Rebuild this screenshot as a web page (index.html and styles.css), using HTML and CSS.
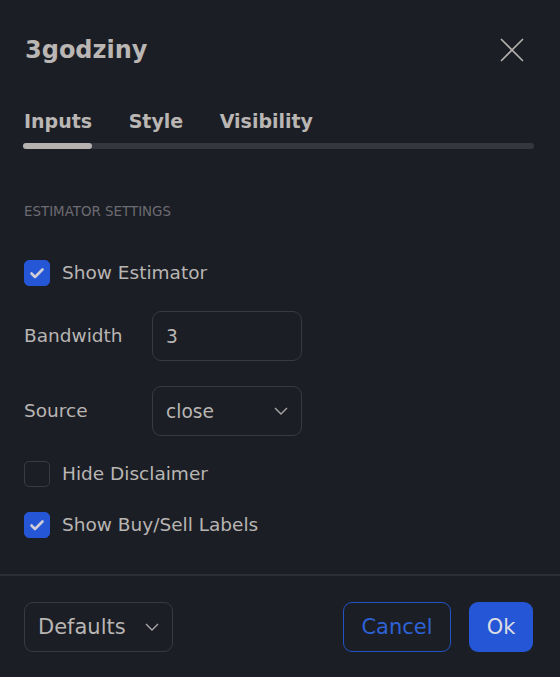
FILE: index.html
```html
<!DOCTYPE html>
<html>
<head>
<meta charset="utf-8">
<link rel="stylesheet" href="styles.css">
</head>
<body>
<div class="dialog">
  <div class="header">
    <div class="title">3godziny</div>
    <svg class="close" width="24" height="24" viewBox="0 0 24 24"><path d="M1 1 L23 23 M23 1 L1 23" stroke="#b3b0ae" stroke-width="1.6" fill="none"/></svg>
  </div>
  <div class="tabs">
    <span class="tab">Inputs</span>
    <span class="tab">Style</span>
    <span class="tab">Visibility</span>
  </div>
  <div class="tabbar"><div class="tabbar-active"></div></div>

  <div class="section">Estimator settings</div>

  <div class="rows">
    <div class="check-row">
      <span class="box checked"><svg width="26" height="26" viewBox="0 0 26 26"><path d="M7.5 13.5 L11 17 L18.5 9.5" stroke="#cfcdd6" stroke-width="2.6" fill="none" stroke-linecap="round" stroke-linejoin="round"/></svg></span>
      <span class="check-label">Show Estimator</span>
    </div>
    <div class="field-row">
      <span class="field-label">Bandwidth</span>
      <div class="input">3</div>
    </div>
    <div class="field-row">
      <span class="field-label">Source</span>
      <div class="input select">close<svg class="chev" width="14" height="8" viewBox="0 0 14 8"><path d="M1 1 L7 7 L13 1" stroke="#a9a6a5" stroke-width="1.4" fill="none"/></svg></div>
    </div>
    <div class="check-row">
      <span class="box"></span>
      <span class="check-label">Hide Disclaimer</span>
    </div>
    <div class="check-row">
      <span class="box checked"><svg width="26" height="26" viewBox="0 0 26 26"><path d="M7.5 13.5 L11 17 L18.5 9.5" stroke="#cfcdd6" stroke-width="2.6" fill="none" stroke-linecap="round" stroke-linejoin="round"/></svg></span>
      <span class="check-label">Show Buy/Sell Labels</span>
    </div>
  </div>

  <div class="separator"></div>

  <div class="footer">
    <div class="defaults">Defaults<svg class="chev" width="14" height="8" viewBox="0 0 14 8"><path d="M1 1 L7 7 L13 1" stroke="#a9a6a5" stroke-width="1.4" fill="none"/></svg></div>
    <div class="actions">
      <div class="btn cancel">Cancel</div>
      <div class="btn ok">Ok</div>
    </div>
  </div>
</div>
</body>
</html>
```
FILE: styles.css
```css
html, body {
  margin: 0;
  padding: 0;
  background: #1c1e25;
}
body {
  font-family: "DejaVu Sans", Verdana, sans-serif;
  color: #b8b5b3;
  width: 560px;
  height: 677px;
  overflow: hidden;
}
.dialog {
  display: flex;
  flex-direction: column;
}
.header {
  height: 100px;
  display: flex;
  align-items: center;
  justify-content: space-between;
  padding: 0 36px 0 25px;
}
.title {
  font-size: 24px;
  font-weight: 700;
  line-height: 30px;
  color: #b9b6b4;
}
.close {
  display: block;
}
.tabs {
  display: flex;
  gap: 36.5px;
  height: 24px;
  align-items: center;
  margin-top: 9px;
  padding-left: 24px;
}
.tab {
  font-size: 19px;
  font-weight: 700;
  line-height: 24px;
  color: #b9b6b4;
}
.tabbar {
  margin: 10px 26px 0 23px;
  height: 6px;
  border-radius: 3px;
  background: #35373e;
  display: flex;
}
.tabbar-active {
  width: 69px;
  height: 6px;
  border-radius: 3px;
  background: #b5b2b0;
}
.section {
  margin-top: 55px;
  padding-left: 24px;
  font-size: 13.4px;
  line-height: 16px;
  text-transform: uppercase;
  color: #6b6b71;
}
.rows {
  margin-top: 40px;
  padding-left: 24px;
  display: flex;
  flex-direction: column;
  gap: 25px;
}
.check-row {
  display: flex;
  align-items: center;
  height: 26px;
}
.box {
  width: 26px;
  height: 26px;
  box-sizing: border-box;
  border: 1px solid #3a3b42;
  border-radius: 5px;
  margin-right: 12px;
  display: flex;
}
.box.checked {
  background: #2456d6;
  border-color: #2456d6;
}
.box svg {
  margin: -1px;
}
.check-label {
  font-size: 18.5px;
  line-height: 24px;
}
.field-row {
  display: flex;
  align-items: center;
  height: 50px;
}
.field-label {
  width: 128px;
  font-size: 18.5px;
  line-height: 24px;
}
.input {
  width: 150px;
  height: 50px;
  box-sizing: border-box;
  border: 1px solid #393a41;
  border-radius: 9px;
  padding: 0 13px;
  display: flex;
  align-items: center;
  font-size: 18.6px;
}
.select {
  justify-content: space-between;
}
.separator {
  margin-top: 36px;
  height: 2px;
  background: #2c2e36;
}
.footer {
  margin-top: 26px;
  padding: 0 27px 0 24px;
  display: flex;
  justify-content: space-between;
  align-items: center;
}
.defaults {
  width: 149px;
  height: 50px;
  box-sizing: border-box;
  border: 1px solid #393a41;
  border-radius: 9px;
  padding: 0 13px;
  display: flex;
  align-items: center;
  justify-content: space-between;
  font-size: 21px;
}
.actions {
  display: flex;
  gap: 18px;
}
.btn {
  height: 50px;
  box-sizing: border-box;
  border-radius: 9px;
  display: flex;
  align-items: center;
  justify-content: center;
  font-size: 21px;
}
.cancel {
  width: 108px;
  border: 1px solid #2352c4;
  color: #2d62d6;
}
.ok {
  width: 64px;
  background: #2456d6;
  color: #dcdce4;
}
```
